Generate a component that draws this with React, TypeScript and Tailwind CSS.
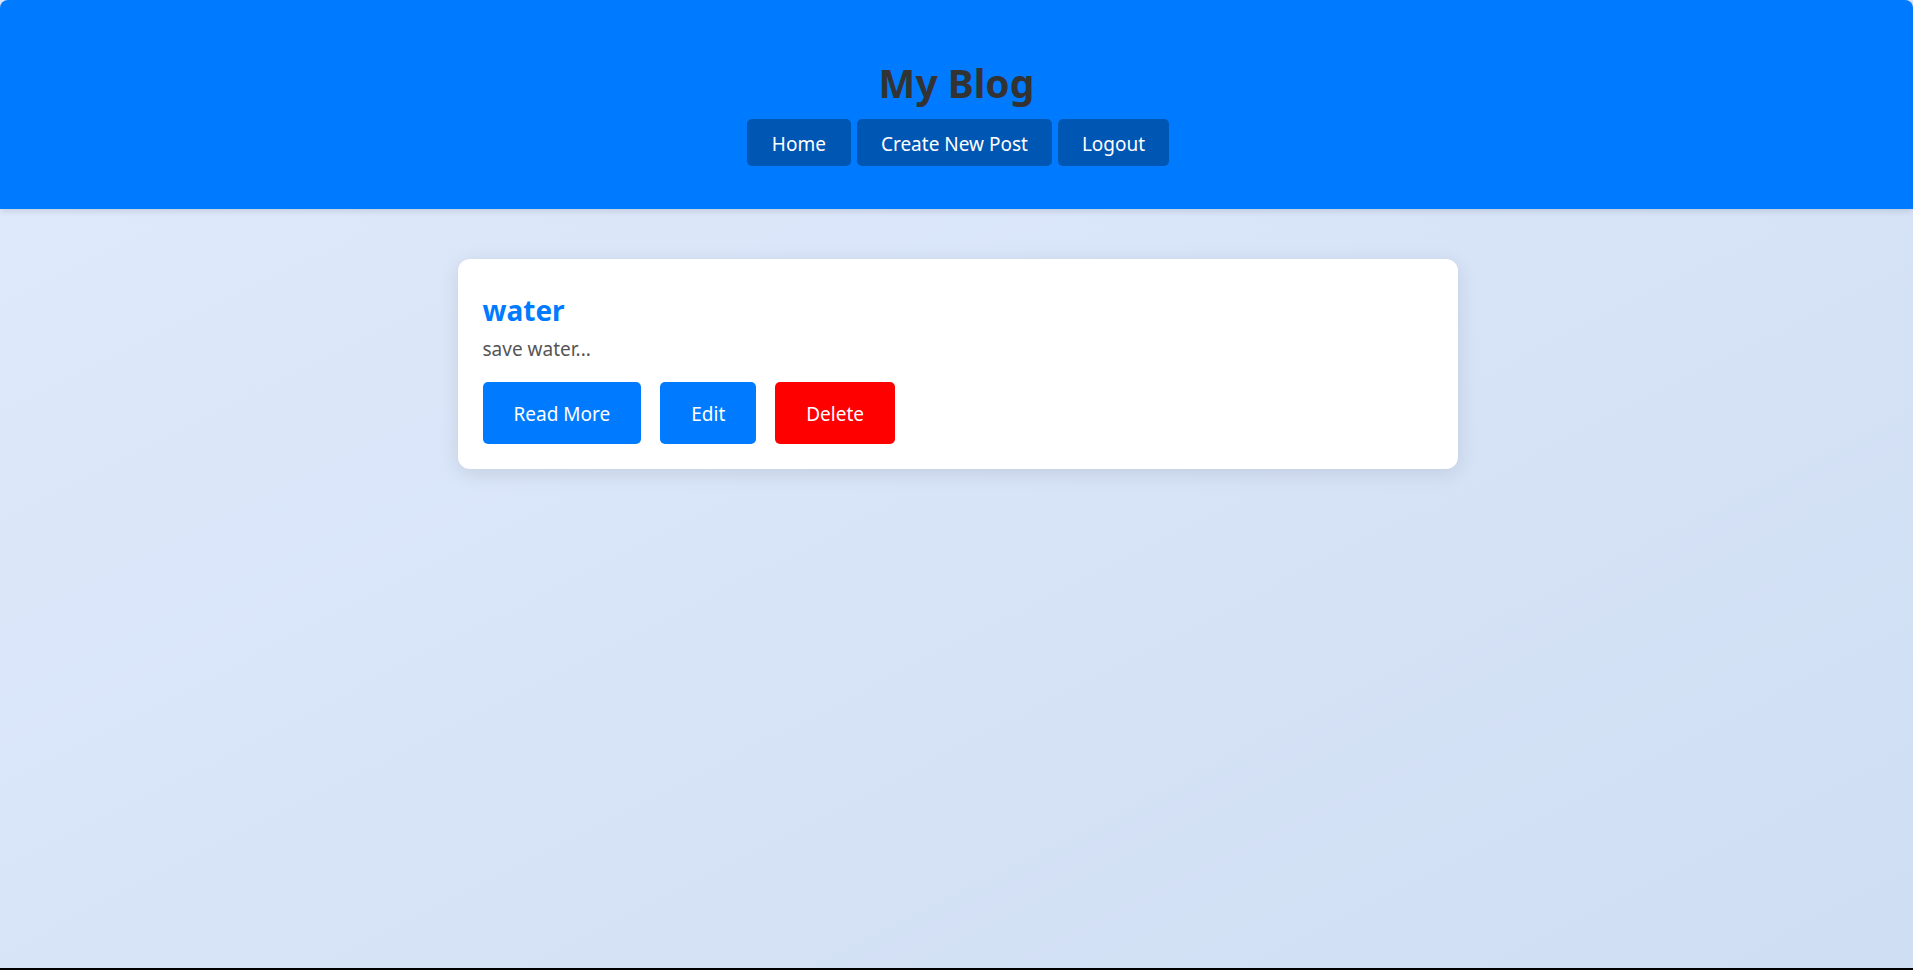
import React from 'react';

const posts = [{ id: 1, title: 'water', excerpt: 'save water...' }];

const App = () => {
  return (
    <div
      className="h-screen flex flex-col bg-gradient-to-br from-[#e0eafc] to-[#cfdef3] border-b-2 border-black"
      style={{ fontFamily: '"Noto Sans", "Open Sans", sans-serif' }}
    >
      {/* Header */}
      <header className="bg-[#007bff] rounded-t-[8px] pt-[59px] pb-[43px] text-center shadow-[0_2px_6px_rgba(0,0,0,0.12)]">
        <h1 className="m-0 text-[39px] leading-[48px] font-bold text-[#333]">My Blog</h1>
        <nav className="mt-[12px] pl-[3px] flex justify-center gap-[6px]">
          <a className="bg-[#0056b3] text-white text-[19px] leading-[25px] pt-[13px] pb-[9px] px-[25px] rounded-[5px] cursor-pointer">
            Home
          </a>
          <a className="bg-[#0056b3] text-white text-[19px] leading-[25px] pt-[13px] pb-[9px] px-[24px] rounded-[5px] cursor-pointer">
            Create New Post
          </a>
          <a className="bg-[#0056b3] text-white text-[19px] leading-[25px] pt-[13px] pb-[9px] px-[24px] rounded-[5px] cursor-pointer">
            Logout
          </a>
        </nav>
      </header>

      {/* Posts */}
      <main className="flex-1 pt-[50px] pl-[2px]">
        {posts.map((post) => (
          <div
            key={post.id}
            className="mx-auto w-full max-w-[1000px] bg-white rounded-[12px] p-[25px] shadow-[0_4px_20px_rgba(0,0,0,0.1)]"
          >
            <h2 className="mt-[8px] text-[28px] leading-[36px] font-bold text-[#007bff]">{post.title}</h2>
            <p className="mt-[8px] text-[19px] leading-[26px] text-[#555]">{post.excerpt}</p>
            <div className="mt-[20px] flex gap-[19px]">
              <button className="bg-[#007bff] text-white text-[19px] leading-[26px] pt-[19px] pb-[17px] px-[31px] rounded-[5px]">
                Read More
              </button>
              <button className="bg-[#007bff] text-white text-[19px] leading-[26px] pt-[19px] pb-[17px] px-[31px] rounded-[5px]">
                Edit
              </button>
              <button className="bg-[#ff0000] text-white text-[19px] leading-[26px] pt-[19px] pb-[17px] px-[31px] rounded-[5px]">
                Delete
              </button>
            </div>
          </div>
        ))}
      </main>
    </div>
  );
};

export default App;
